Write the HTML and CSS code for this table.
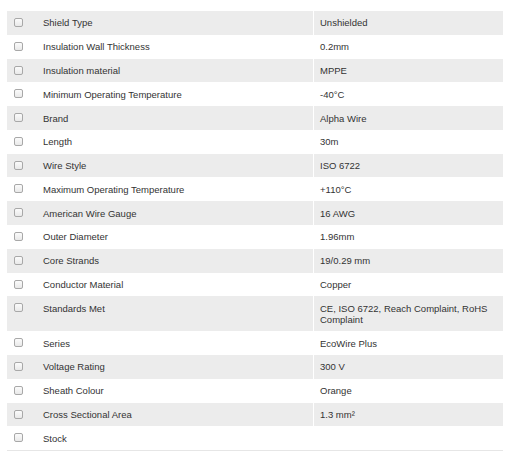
FILE: index.html
```html
<!DOCTYPE html>
<html>
<head>
<meta charset="utf-8">
<link rel="stylesheet" href="styles.css">
</head>
<body>
<div class="specs">
  <div class="row"><div class="cb"><span class="box"></span></div><div class="label">Shield Type</div><div class="value">Unshielded</div></div>
  <div class="row"><div class="cb"><span class="box"></span></div><div class="label">Insulation Wall Thickness</div><div class="value">0.2mm</div></div>
  <div class="row"><div class="cb"><span class="box"></span></div><div class="label">Insulation material</div><div class="value">MPPE</div></div>
  <div class="row"><div class="cb"><span class="box"></span></div><div class="label">Minimum Operating Temperature</div><div class="value">-40°C</div></div>
  <div class="row"><div class="cb"><span class="box"></span></div><div class="label">Brand</div><div class="value">Alpha Wire</div></div>
  <div class="row"><div class="cb"><span class="box"></span></div><div class="label">Length</div><div class="value">30m</div></div>
  <div class="row"><div class="cb"><span class="box"></span></div><div class="label">Wire Style</div><div class="value">ISO 6722</div></div>
  <div class="row"><div class="cb"><span class="box"></span></div><div class="label">Maximum Operating Temperature</div><div class="value">+110°C</div></div>
  <div class="row"><div class="cb"><span class="box"></span></div><div class="label">American Wire Gauge</div><div class="value">16 AWG</div></div>
  <div class="row"><div class="cb"><span class="box"></span></div><div class="label">Outer Diameter</div><div class="value">1.96mm</div></div>
  <div class="row"><div class="cb"><span class="box"></span></div><div class="label">Core Strands</div><div class="value">19/0.29 mm</div></div>
  <div class="row"><div class="cb"><span class="box"></span></div><div class="label">Conductor Material</div><div class="value">Copper</div></div>
  <div class="row"><div class="cb"><span class="box"></span></div><div class="label">Standards Met</div><div class="value">CE, ISO 6722, Reach Complaint, RoHS Complaint</div></div>
  <div class="row"><div class="cb"><span class="box"></span></div><div class="label">Series</div><div class="value">EcoWire Plus</div></div>
  <div class="row"><div class="cb"><span class="box"></span></div><div class="label">Voltage Rating</div><div class="value">300 V</div></div>
  <div class="row"><div class="cb"><span class="box"></span></div><div class="label">Sheath Colour</div><div class="value">Orange</div></div>
  <div class="row"><div class="cb"><span class="box"></span></div><div class="label">Cross Sectional Area</div><div class="value">1.3 mm²</div></div>
  <div class="row"><div class="cb"><span class="box"></span></div><div class="label">Stock</div><div class="value"></div></div>
</div>
</body>
</html>
```
FILE: styles.css
```css
html, body {
  margin: 0;
  padding: 0;
  background: #fff;
}
body {
  padding: 11px 5px 0 7px;
  font-family: "Liberation Sans", Arial, sans-serif;
  font-size: 9.5px;
  line-height: 11px;
  color: #333;
}
.specs {
  width: 496px;
  border-bottom: 1px solid #e6e6e6;
}
.row {
  display: grid;
  grid-template-columns: 29px 277px 190px;
}
.row:nth-child(odd) {
  background: #ececec;
}
.cb {
  padding: 7px 0 0 7px;
}
.box {
  display: block;
  width: 9px;
  height: 9px;
  box-sizing: border-box;
  border: 1px solid #a8a8a8;
  border-radius: 2px;
  background: linear-gradient(#fbfbfb, #e9e9e9);
}
.label {
  padding: 6.4px 7px;
}
.value {
  padding: 6.4px 8px 6.4px 6px;
  border-left: 1px solid #fff;
}
```
